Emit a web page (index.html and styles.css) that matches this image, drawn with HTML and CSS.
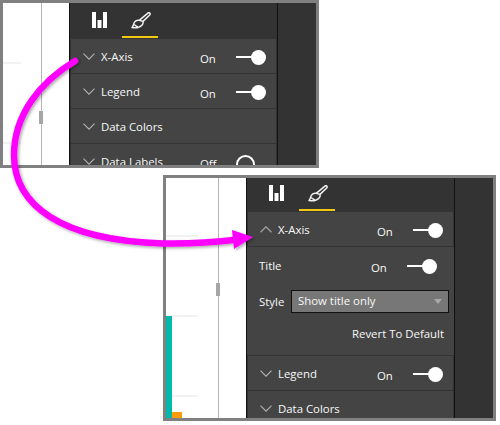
FILE: index.html
```html
<!DOCTYPE html>
<html lang="en">
<head>
<meta charset="utf-8">
<title>Format pane</title>
<link rel="stylesheet" href="styles.css">
</head>
<body>
<svg width="0" height="0" class="defs">
  <symbol id="bars" viewBox="0 0 15 16"><path d="M0 0h4v16H0zM5.500 8h4v8h-4zM11 0h4v16h-4z" fill="#fff"/></symbol>
  <symbol id="brush" viewBox="0 0 20 17"><path d="M17.200.8c.7-.4 1.600 0 1.900.7.200.6 0 1.100-.4 1.500L12 9.400c.3 1.300-.1 2.800-1.100 3.800-1.700 1.800-5.800 3-9.900 2.300.9-.9 1.300-1.800 1.500-2.900.3-1.500.9-2.800 2.300-3.700 1.100-.7 2.300-.9 3.400-.6zM8.200 8.300l3.800 1.100M3 12.500l4.500 3.200" fill="none" stroke="#f0f0f0" stroke-width="1.500" stroke-linejoin="round"/></symbol>
  <symbol id="down" viewBox="0 0 12 7"><path d="M.5.700 6 6.200 11.500.7" fill="none" stroke="#b3b3b3" stroke-width="1.100"/></symbol>
  <symbol id="up" viewBox="0 0 12 7"><path d="M.5 6.300 6 .8l5.500 5.500" fill="none" stroke="#a0a0a0" stroke-width="1.300"/></symbol>
</svg>

<section class="window window-a">
  <div class="canvas canvas-a">
    <i class="gridline gridline-a1"></i>
    <i class="gridline gridline-a2"></i>
    <div class="divider"><i class="handle handle-a"></i></div>
  </div>
  <div class="pane">
    <div class="tabs">
      <svg class="icon-bars"><use href="#bars"/></svg>
      <div class="tab-active"><svg class="icon-brush"><use href="#brush"/></svg></div>
    </div>
    <div class="row"><svg class="chev"><use href="#down"/></svg><span class="label">X-Axis</span><span class="state">On</span><span class="toggle"></span></div>
    <div class="row"><svg class="chev"><use href="#down"/></svg><span class="label">Legend</span><span class="state">On</span><span class="toggle"></span></div>
    <div class="row"><svg class="chev"><use href="#down"/></svg><span class="label">Data Colors</span></div>
    <div class="row"><svg class="chev"><use href="#down"/></svg><span class="label">Data Labels</span><span class="state">Off</span><span class="toggle toggle-off"></span></div>
  </div>
  <div class="rail"></div>
</section>

<section class="window window-b">
  <div class="canvas canvas-b">
    <i class="gridline gridline-b1"></i>
    <i class="gridline gridline-b2"></i>
    <i class="gridline gridline-b3"></i>
    <i class="bar-teal"></i>
    <i class="bar-orange"></i>
    <div class="divider"><i class="handle handle-b"></i></div>
  </div>
  <div class="pane">
    <div class="tabs">
      <svg class="icon-bars"><use href="#bars"/></svg>
      <div class="tab-active"><svg class="icon-brush"><use href="#brush"/></svg></div>
    </div>
    <div class="row"><svg class="chev"><use href="#up"/></svg><span class="label">X-Axis</span><span class="state">On</span><span class="toggle"></span></div>
    <div class="expanded">
      <div class="prop"><span class="prop-name">Title</span><span class="state">On</span><span class="toggle"></span></div>
      <div class="prop-style"><span class="style-name">Style</span>
        <div class="select"><span>Show title only</span><i class="caret"></i></div>
      </div>
      <div class="revert">Revert To Default</div>
    </div>
    <div class="row"><svg class="chev"><use href="#down"/></svg><span class="label">Legend</span><span class="state">On</span><span class="toggle"></span></div>
    <div class="row"><svg class="chev"><use href="#down"/></svg><span class="label">Data Colors</span></div>
  </div>
  <div class="rail"></div>
</section>

<svg class="arrow" width="500" height="425" viewBox="0 0 500 425">
  <defs>
    <filter id="soft" x="-10%" y="-10%" width="120%" height="120%"><feDropShadow dx="1.500" dy="1.500" stdDeviation="1.500" flood-color="#000" flood-opacity=".35"/></filter>
  </defs>
  <g filter="url(#soft)">
    <path d="M75 61C40 82 14 115 14 155 14 205 60 240 163 243.500c25 .5 50-1 75-4" fill="none" stroke="#ff00ff" stroke-width="6.500" stroke-linecap="round"/>
    <path d="M232 230 253 237 234 249z" fill="#ff00ff"/>
  </g>
</svg>
</body>
</html>
```
FILE: styles.css
```css
* { box-sizing: border-box; }
html, body { margin: 0; padding: 0; }
body {
  width: 500px;
  height: 425px;
  position: relative;
  overflow: hidden;
  background: #fff;
  font-family: "Open Sans", "Liberation Sans", sans-serif;
  font-size: 11.400px;
  color: #f8f8f8;
}
.defs { position: absolute; }
.window {
  position: absolute;
  display: flex;
  border: 3px solid #808080;
  overflow: hidden;
  background: #333;
}
.window-a { left: 0; top: 0; width: 319px; height: 168px; }
.window-b { left: 163px; top: 175px; width: 333px; height: 246px; }

.canvas { position: relative; flex: none; background: #fff; border-right: 1px solid #111; }
.canvas-a { width: 67px; }
.canvas-b { width: 81px; }
.divider { position: absolute; top: 0; bottom: 0; width: 1px; background: #b5b5b5; }
.canvas-a .divider { left: 38px; }
.canvas-b .divider { left: 52px; }
.handle { position: absolute; left: -2px; width: 4px; height: 13px; background: #a6a6a6; }
.handle-a { top: 108px; }
.handle-b { top: 105px; }
.gridline { position: absolute; left: 0; height: 2px; background: #f2f2f2; }
.gridline-a1 { top: 59px; width: 18px; }
.gridline-a2 { top: 139px; width: 18px; }
.gridline-b1 { top: 57px; width: 32px; }
.gridline-b2 { top: 137px; width: 32px; }
.gridline-b3 { top: 217px; width: 32px; }
.bar-teal { position: absolute; left: 0; top: 138px; bottom: 0; width: 6px; background: #01b8aa; }
.bar-orange { position: absolute; left: 6px; top: 234px; bottom: 0; width: 10px; background: #fd9b0b; }

.pane { flex: none; width: 208px; background: #333; border-right: 1px solid #111; }
.tabs { height: 35px; display: flex; align-items: flex-start; padding-left: 22px; }
.window-b .tabs { height: 33px; }
.icon-bars { width: 15px; height: 16px; margin-top: 9px; }
.window-b .icon-bars { margin-top: 7px; }
.tab-active { width: 36px; height: 100%; margin-left: 15px; border-bottom: 2px solid #f2c811; padding: 9px 0 0 9px; }
.window-b .tab-active { padding-top: 7px; }
.icon-brush { display: block; width: 20px; height: 17px; }

.row {
  height: 34px;
  margin: 1px;
  background: #444;
  display: flex;
  align-items: center;
  position: relative;
}
.chev { width: 12px; height: 7px; margin-left: 12px; flex: none; }
.label { margin: 2px 0 0 6px; line-height: 16px; }
.state { position: absolute; left: 129px; top: 11px; line-height: 17px; }
.toggle { position: absolute; left: 165px; top: 11px; width: 30px; height: 15px; }
.toggle::before { content: ""; position: absolute; left: 0; right: 4px; top: 6px; height: 2px; background: #fff; }
.toggle::after { content: ""; position: absolute; right: 0; top: 0; width: 15px; height: 15px; border-radius: 50%; background: #fff; }
.toggle-off::before { display: none; }
.toggle-off::after { right: auto; left: 0; background: transparent; border: 2px solid #fff; }

.expanded { background: #444; height: 108px; }
.prop { height: 36px; position: relative; }
.prop-name { position: absolute; left: 12px; top: 10px; line-height: 17px; }
.prop .state { left: 124px; top: 12px; }
.prop .toggle { left: 160px; top: 12px; }
.prop-style { display: flex; align-items: center; padding-left: 12px; height: 23px; margin-top: 7px; }
.style-name { width: 32px; }
.select {
  width: 158px;
  height: 23px;
  border: 1px solid #111;
  background: #777;
  display: flex;
  align-items: center;
  justify-content: space-between;
  padding: 0 6px 3px 6px;
}
.caret { width: 0; height: 0; border: 4px solid transparent; border-top: 5px solid #aaa; border-bottom: 0; margin-top: 3px; }
.revert { text-align: right; padding-right: 10px; margin-top: 12px; line-height: 17px; }
.rail { flex: 1; background: #333; }
.arrow { position: absolute; left: 0; top: 0; pointer-events: none; }
```
